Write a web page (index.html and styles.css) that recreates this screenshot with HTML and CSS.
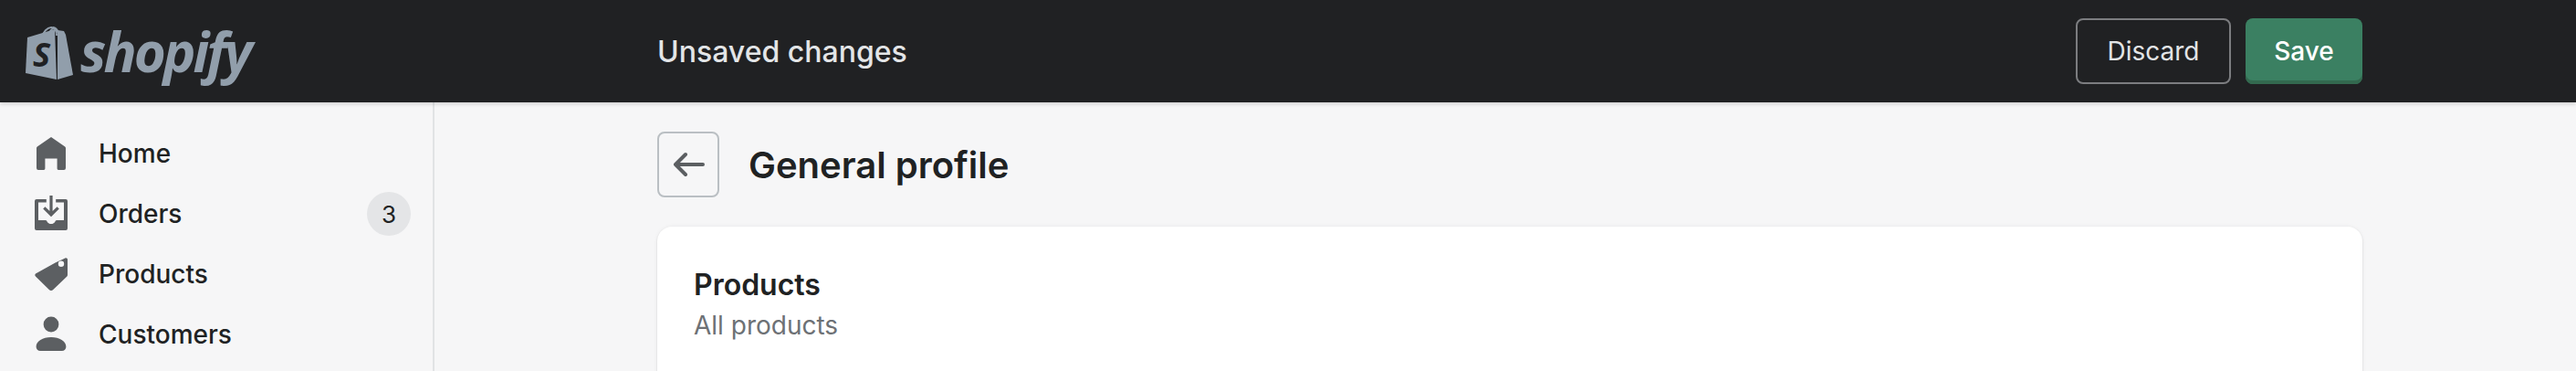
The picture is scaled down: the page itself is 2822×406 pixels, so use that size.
FILE: index.html
```html
<!DOCTYPE html>
<html>
<head>
  <meta charset="utf-8">
  <link rel="stylesheet" href="styles.css">
</head>
<body>
  <div class="topbar">
    <div class="logo">
      <svg class="logo-bag" width="56" height="60" viewBox="0 0 56 60">
        <path class="bag-handle" d="M20 14c1-6 6-11 10-11 4 0 6 4 6 9M27 12c1-5 4-8 7-8M38 9c-1-3-3-6-6-6"/>
        <path class="bag-body" d="M4 14l30-9 2 55-34-7z"/>
        <path class="bag-body" d="M37 6l7 1 2 4 8 44-17 5z"/>
        <text class="bag-letter" x="10" y="46">S</text>
      </svg>
      <span class="logo-text">shopify</span>
    </div>
    <div class="save-title">Unsaved changes</div>
    <div class="save-actions">
      <button class="btn-discard">Discard</button>
      <button class="btn-save">Save</button>
    </div>
  </div>

  <div class="layout">
    <div class="sidebar">
      <div class="nav-item">
        <svg class="nav-icon" width="40" height="40" viewBox="0 0 20 20">
          <path d="M10 1l7.6 5.3c.3.2.4.5.4.8V18a1 1 0 0 1-1 1h-3a.7.7 0 0 1-.7-.7v-5.6H6.700v5.600A.7.700 0 0 1 6 19H3a1 1 0 0 1-1-1V7.100c0-.3.1-.6.400-.8z"/>
        </svg>
        <span class="nav-label">Home</span>
      </div>
      <div class="nav-item">
        <svg class="nav-icon" width="40" height="40" viewBox="0 0 20 20">
          <path d="M2 2h5.400v1.700H3v9.800h3.800c.5 0 .8.300 1 .7.300.7 1.200 1.300 2.200 1.300s1.900-.6 2.200-1.300c.2-.4.500-.7 1-.7H17V3.700h-4.400V2H18a1 1 0 0 1 1 1v15a1 1 0 0 1-1 1H2a1 1 0 0 1-1-1V3a1 1 0 0 1 1-1z"/>
          <path d="M9.200 0h1.600v8.500l2.500-2.400 1.100 1.100L10 11.600 5.600 7.200l1.100-1.100 2.500 2.400z"/>
        </svg>
        <span class="nav-label">Orders</span>
        <span class="nav-badge">3</span>
      </div>
      <div class="nav-item">
        <svg class="nav-icon" width="40" height="40" viewBox="0 0 20 20">
          <path fill-rule="evenodd" d="M12.300 3.800l5.400-2.600c.6-.3 1.300.1 1.300.8v8.400c0 .3-.1.600-.3.800l-7.600 7.300c-.6.600-1.600.6-2.200 0l-7.400-7.300a1 1 0 0 1 0-1.500zM15.500 6a1.600 1.600 0 1 0 0-3.200 1.600 1.600 0 0 0 0 3.200z"/>
        </svg>
        <span class="nav-label">Products</span>
      </div>
      <div class="nav-item">
        <svg class="nav-icon" width="40" height="40" viewBox="0 0 20 20">
          <circle cx="10" cy="4.500" r="4.200"/>
          <path d="M10 11.500c-4.600 0-8.200 2.300-8.200 5.200 0 1.300 1 2.300 2.300 2.300h11.800c1.300 0 2.300-1 2.300-2.300 0-2.900-3.600-5.200-8.200-5.200z"/>
        </svg>
        <span class="nav-label">Customers</span>
      </div>
    </div>

    <div class="main">
      <div class="page-header">
        <button class="btn-back">
          <svg width="40" height="40" viewBox="0 0 40 40">
            <path d="M36 20H6M17 9L6 20l11 11"/>
          </svg>
        </button>
        <h1>General profile</h1>
      </div>
      <div class="card">
        <h2>Products</h2>
        <p>All products</p>
      </div>
    </div>
  </div>
</body>
</html>
```

FILE: styles.css
```css
html, body {
  height: 100%;
}

body {
  margin: 0;
  overflow: hidden;
  display: flex;
  flex-direction: column;
  font-family: Inter, "Liberation Sans", sans-serif;
  background-color: #f6f6f7;
  color: #202223;
}

.topbar {
  position: relative;
  z-index: 1;
  height: 112px;
  flex-shrink: 0;
  display: flex;
  align-items: center;
  background-color: #202123;
  box-shadow: 0 2px 4px rgba(0, 0, 0, 0.15);
}

.logo {
  width: 720px;
  padding-left: 26px;
  box-sizing: border-box;
  display: flex;
  align-items: center;
  gap: 6px;
}

.logo-bag {
  flex-shrink: 0;
  margin-top: 2px;
}

.bag-body {
  fill: #919eab;
}

.bag-handle {
  fill: none;
  stroke: #919eab;
  stroke-width: 2;
}

.bag-letter {
  font-family: "Open Sans", sans-serif;
  font-size: 36px;
  font-weight: 700;
  font-style: italic;
  fill: #202123;
}

.logo-text {
  font-family: "Open Sans", sans-serif;
  font-size: 60px;
  font-weight: 700;
  font-style: italic;
  letter-spacing: -3px;
  line-height: 60px;
  color: #919eab;
}

.save-title {
  flex: 1;
  font-size: 32px;
  font-weight: 500;
  color: #e3e5e7;
}

.save-actions {
  display: flex;
  gap: 16px;
  margin-right: 234px;
}

button {
  height: 72px;
  border-radius: 8px;
  font-family: inherit;
  font-size: 28px;
  cursor: pointer;
}

.btn-discard {
  width: 170px;
  border: 2px solid #7c7d80;
  background: transparent;
  color: #e3e5e7;
}

.btn-save {
  width: 128px;
  border: none;
  background-color: #3b8062;
  box-shadow: inset 0 -4px 0 #33694f;
  color: #fff;
  font-weight: 500;
}

.layout {
  flex: 1;
  display: flex;
  min-height: 0;
}

.sidebar {
  width: 474px;
  flex-shrink: 0;
  padding-top: 23px;
  box-sizing: content-box;
  border-right: 2px solid #e1e3e5;
}

.nav-item {
  height: 66px;
  display: flex;
  align-items: center;
  padding-left: 36px;
  padding-right: 24px;
}

.nav-icon {
  fill: #5c5f62;
  margin-right: 32px;
  flex-shrink: 0;
}

.nav-label {
  flex: 1;
  font-size: 28px;
  font-weight: 500;
}

.nav-badge {
  width: 48px;
  height: 48px;
  border-radius: 50%;
  display: flex;
  align-items: center;
  justify-content: center;
  background-color: #e4e5e7;
  font-size: 26px;
}

.main {
  flex: 1;
  padding: 32px 234px 0 244px;
}

.page-header {
  display: flex;
  align-items: center;
  gap: 32px;
  margin-bottom: 32px;
}

.btn-back {
  width: 68px;
  padding: 0;
  display: flex;
  align-items: center;
  justify-content: center;
  border: 2px solid #babfc3;
  background: transparent;
}

.btn-back svg {
  fill: none;
  stroke: #5c5f62;
  stroke-width: 4;
  stroke-linecap: round;
  stroke-linejoin: round;
}

h1 {
  margin: 0;
  font-size: 40px;
  font-weight: 600;
}

.card {
  height: 300px;
  padding: 40px;
  background-color: #fff;
  border-radius: 16px;
  box-shadow: 0 0 5px rgba(23, 24, 24, 0.05), 0 1px 2px rgba(0, 0, 0, 0.15);
}

h2 {
  margin: 0;
  font-size: 32px;
  font-weight: 600;
  line-height: 48px;
}

.card p {
  margin: 0;
  font-size: 28px;
  line-height: 40px;
  color: #6d7175;
}
```
